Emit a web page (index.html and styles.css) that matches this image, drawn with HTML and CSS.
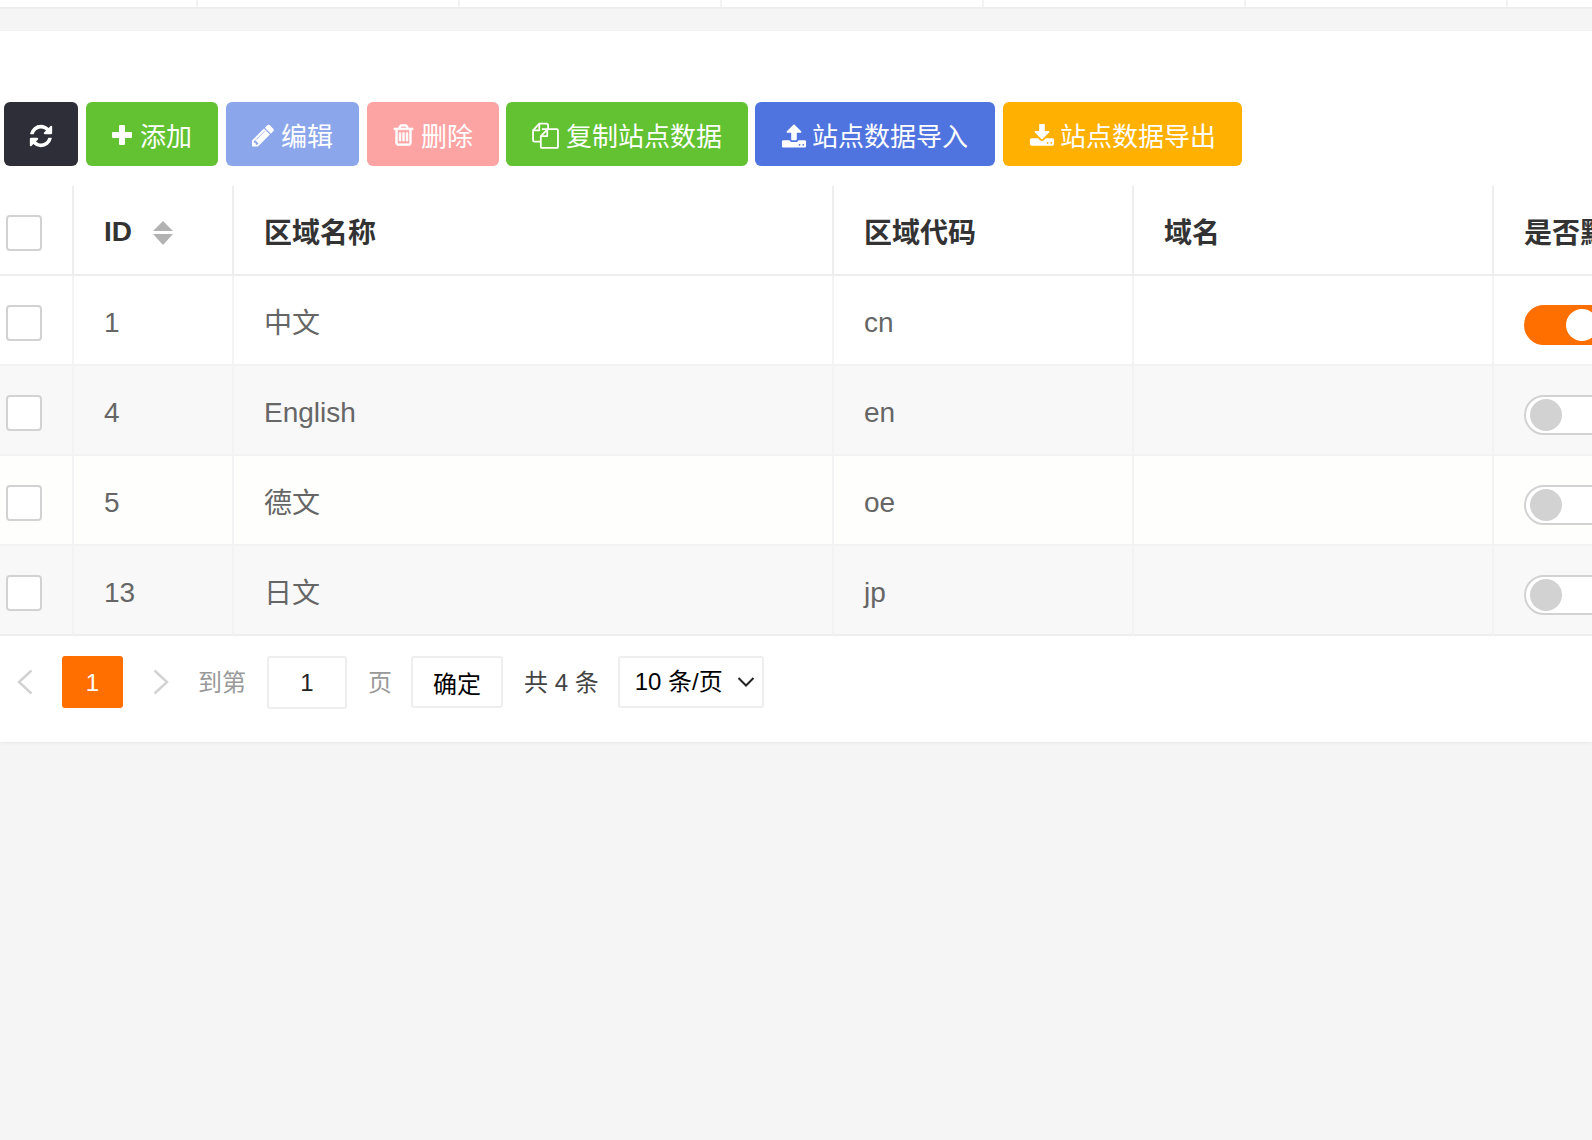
FILE: index.html
```html
<!DOCTYPE html>
<html lang="zh-CN">
<head>
<meta charset="utf-8">
<title>站点管理</title>
<link rel="stylesheet" href="styles.css">
</head>
<body>
<div class="top-strip">
  <span class="strip-cell first"></span><span class="strip-cell"></span><span class="strip-cell"></span><span class="strip-cell"></span><span class="strip-cell"></span><span class="strip-cell"></span><span class="strip-cell"></span>
</div>
<main class="card">
  <div class="toolbar">
    <button class="btn btn-dark icon-only"><svg class="ico ico-refresh" viewBox="0 0 1792 1792"><path d="M1639 1056q0 5-1 7-64 268-268 434.5t-478 166.5q-146 0-282.5-55t-243.5-157l-129 129q-19 19-45 19t-45-19-19-45v-448q0-26 19-45t45-19h448q26 0 45 19t19 45-19 45l-137 137q71 66 161 102t187 36q134 0 250-65t186-179q11-17 53-117 8-23 30-23h192q13 0 22.5 9.5t9.5 22.5zm25-800v448q0 26-19 45t-45 19h-448q-26 0-45-19t-19-45 19-45l138-138q-148-137-349-137-134 0-250 65t-186 179q-11 17-53 117-8 23-30 23h-199q-13 0-22.5-9.5t-9.5-22.5v-7q65-268 270-434.5t480-166.5q146 0 284 55.5t245 156.5l130-129q19-19 45-19t45 19 19 45z"/></svg></button>
    <button class="btn btn-green"><svg class="ico ico-plus" viewBox="0 0 20 20"><path d="M7 1a1 1 0 0 1 1-1h4a1 1 0 0 1 1 1v6h6a1 1 0 0 1 1 1v4a1 1 0 0 1-1 1h-6v6a1 1 0 0 1-1 1H8a1 1 0 0 1-1-1v-6H1a1 1 0 0 1-1-1V8a1 1 0 0 1 1-1h6z"/></svg>添加</button>
    <button class="btn btn-blue-off"><svg class="ico ico-pencil" viewBox="128 128 1600 1536"><path d="M491 1536l91-91-235-235-91 91v107h128v128h107zm523-928q0-22-22-22-10 0-17 7l-542 542q-7 7-7 17 0 22 22 22 10 0 17-7l542-542q7-7 7-17zm-54-192l416 416-832 832h-416v-416zm683 96q0 53-37 90l-166 166-416-416 166-165q36-38 90-38 53 0 91 38l235 234q37 39 37 91z"/></svg>编辑</button>
    <button class="btn btn-red-off"><svg class="ico ico-trash" viewBox="128 128 1536 1536"><path class="thick" d="M704 736v576q0 14-9 23t-23 9h-64q-14 0-23-9t-9-23v-576q0-14 9-23t23-9h64q14 0 23 9t9 23zm256 0v576q0 14-9 23t-23 9h-64q-14 0-23-9t-9-23v-576q0-14 9-23t23-9h64q14 0 23 9t9 23zm256 0v576q0 14-9 23t-23 9h-64q-14 0-23-9t-9-23v-576q0-14 9-23t23-9h64q14 0 23 9t9 23zm128 724v-948h-896v948q0 22 7 40.5t14.500 27 10.500 8.500h832q3 0 10.500-8.500t14.500-27 7-40.500zm-672-1076h448l-48-117q-7-9-17-11h-317q-10 2-17 11zm928 32v64q0 14-9 23t-23 9h-96v948q0 83-47 143.500t-113 60.500h-832q-66 0-113-58.500t-47-141.500v-952h-96q-14 0-23-9t-9-23v-64q0-14 9-23t23-9h309l70-167q15-37 54-63t79-26h320q40 0 79 26t54 63l70 167h309q14 0 23 9t9 23z"/></svg>删除</button>
    <button class="btn btn-green tight"><svg class="ico ico-copy" viewBox="0 0 26 26"><path class="line" d="M8 19H2.500a1.500 1.500 0 0 1-1.500-1.500V8l6-6.500h7a1.500 1.500 0 0 1 1.500 1.500v3.500M1.500 8H7V2"/><path class="line" d="M9.500 6.800h14.500a1 1 0 0 1 1 1V24a1 1 0 0 1-1 1H9.500a1 1 0 0 1-1-1V13.500l6-6"/><path class="line" d="M8.500 13.500h6.200V7"/></svg>复制站点数据</button>
    <button class="btn btn-blue tight"><svg class="ico ico-load" viewBox="0 64 1792 1600"><path d="M1344 1472q0-26-19-45t-45-19-45 19-19 45 19 45 45 19 45-19 19-45zm256 0q0-26-19-45t-45-19-45 19-19 45 19 45 45 19 45-19 19-45zm128-224v320q0 40-28 68t-68 28h-1472q-40 0-68-28t-28-68v-320q0-40 28-68t68-28h427q21 56 70.500 92t110.500 36h256q61 0 110.500-36t70.500-92h427q40 0 68 28t28 68zm-325-648q-17 40-59 40h-256v448q0 26-19 45t-45 19h-256q-26 0-45-19t-19-45v-448h-256q-42 0-59-40-17-39 14-69l448-448q18-19 45-19t45 19l448 448q31 30 14 69z"/></svg>站点数据导入</button>
    <button class="btn btn-orange"><svg class="ico ico-load" viewBox="0 64 1792 1600"><path d="M1344 1344q0-26-19-45t-45-19-45 19-19 45 19 45 45 19 45-19 19-45zm256 0q0-26-19-45t-45-19-45 19-19 45 19 45 45 19 45-19 19-45zm128-224v320q0 40-28 68t-68 28h-1472q-40 0-68-28t-28-68v-320q0-40 28-68t68-28h465l135 136q58 56 136 56t136-56l136-136h464q40 0 68 28t28 68zm-325-569q17 41-14 70l-448 448q-18 19-45 19t-45-19l-448-448q-31-29-14-70 17-39 59-39h256v-448q0-26 19-45t45-19h256q26 0 45 19t19 45v448h256q42 0 59 39z"/></svg>站点数据导出</button>
  </div>

  <div class="table-wrap">
    <table class="data">
      <colgroup>
        <col class="c-check"><col class="c-id"><col class="c-name"><col class="c-code"><col class="c-domain"><col class="c-default">
      </colgroup>
      <thead>
        <tr>
          <th class="check-cell"><span class="checkbox"></span></th>
          <th class="latin"><span class="id-head">ID<svg class="sort" viewBox="0 0 20 24"><path d="M10 0l10 10H0z"/><path d="M0 13h20L10 24z"/></svg></span></th>
          <th>区域名称</th>
          <th>区域代码</th>
          <th>域名</th>
          <th>是否默认</th>
        </tr>
      </thead>
      <tbody>
        <tr>
          <td class="check-cell"><span class="checkbox"></span></td><td>1</td><td class="cjk">中文</td><td>cn</td><td></td><td><span class="switch on"><i class="knob"></i></span></td>
        </tr>
        <tr class="alt">
          <td class="check-cell"><span class="checkbox"></span></td><td>4</td><td>English</td><td>en</td><td></td><td><span class="switch"><i class="knob"></i></span></td>
        </tr>
        <tr class="warm">
          <td class="check-cell"><span class="checkbox"></span></td><td>5</td><td class="cjk">德文</td><td>oe</td><td></td><td><span class="switch"><i class="knob"></i></span></td>
        </tr>
        <tr class="alt">
          <td class="check-cell"><span class="checkbox"></span></td><td>13</td><td class="cjk">日文</td><td>jp</td><td></td><td><span class="switch"><i class="knob"></i></span></td>
        </tr>
      </tbody>
    </table>
  </div>

  <nav class="pager">
    <svg class="chev prev" viewBox="0 0 16 26"><path d="M14.500 1.500L2 13l12.500 11.500"/></svg>
    <span class="page-num">1</span>
    <svg class="chev next" viewBox="0 0 16 26"><path d="M1.500 1.500L14 13 1.500 24.500"/></svg>
    <span class="muted goto">到第</span>
    <span class="page-input">1</span>
    <span class="muted page-word">页</span>
    <span class="confirm">确定</span>
    <span class="total">共 4 条</span>
    <span class="size-select">10 条/页<svg class="caret" viewBox="0 0 18 12"><path d="M1.500 2L9 9.500 16.500 2"/></svg></span>
  </nav>
</main>
</body>
</html>
```
FILE: styles.css
```css
* { box-sizing: border-box; }
html, body { margin: 0; padding: 0; }
body {
  width: 1592px;
  height: 1140px;
  overflow: hidden;
  background: #f5f5f5;
  font-family: "Liberation Sans", "Noto Sans CJK SC", sans-serif;
  color: #666;
}

/* remnant of the table scrolled off the top */
.top-strip {
  display: flex;
  height: 9px;
  background: #fff;
  border-bottom: 2px solid #eee;
  overflow: hidden;
}
.strip-cell {
  flex: 0 0 262px;
  border-right: 2px solid #f3f3f3;
}
.strip-cell.first { flex-basis: 198px; }

.card {
  margin-top: 22px;
  height: 711px;
  background: #fff;
  box-shadow: 0 1px 3px rgba(0, 0, 0, .06);
  padding-top: 71px;
  overflow: hidden;
}

/* toolbar */
.toolbar {
  display: flex;
  gap: 8px;
  margin-left: 4px;
  height: 64px;
}
.btn {
  display: inline-flex;
  align-items: center;
  height: 64px;
  padding: 0 26px;
  border: 0;
  border-radius: 6px;
  color: #fff;
  font-family: inherit;
  font-size: 26px;
  white-space: nowrap;
}
.btn.tight { margin-left: -1px; }
.icon-only { padding: 0 24px; }
.btn-dark { background: #2e2e38; }
.btn-green { background: #62c231; }
.btn-blue-off { background: #8ca6ec; }
.btn-red-off { background: #fca4a4; }
.btn-blue { background: #4f74e0; padding-right: 27px; }
.btn-orange { background: #ffb000; }

.ico { display: block; fill: #fff; flex: none; }
.ico .line { fill: none; stroke: #fff; stroke-width: 1.7; stroke-linejoin: round; }
.ico .thick { stroke: #fff; stroke-width: 45; }
.ico-refresh { width: 26px; height: 26px; margin-top: 3px; }
.ico-plus { width: 20px; height: 20px; margin-right: 8px; margin-top: 2px; }
.ico-pencil { width: 23px; height: 23px; margin-right: 6px; margin-top: 2px; }
.ico-trash { width: 21px; height: 24px; margin-right: 7px; margin-top: 2px; }
.ico-copy { width: 27px; height: 27px; margin-right: 7px; margin-top: 2px; }
.ico-load { width: 26px; height: 24px; margin-right: 5px; margin-top: 4px; }

/* table */
.table-wrap {
  margin-top: 20px;
  overflow: hidden;
}
.data {
  width: 1794px;
  table-layout: fixed;
  border-collapse: separate;
  border-spacing: 0;
  font-size: 28px;
}
.c-check { width: 74px; }
.c-id { width: 160px; }
.c-name { width: 600px; }
.c-code { width: 300px; }
.c-domain { width: 360px; }
.c-default { width: 300px; }

th, td {
  height: 90px;
  padding: 0 0 0 30px;
  text-align: left;
  vertical-align: middle;
  white-space: nowrap;
  overflow: hidden;
}
th {
  padding-top: 2px;
  color: #333;
  font-weight: 700;
  border-right: 2px solid #eee;
  border-bottom: 2px solid #eee;
}
th.latin { padding-top: 4px; }
td {
  padding-top: 6px;
  color: #666;
  font-weight: 400;
  border-right: 2px solid #f3f3f3;
  border-bottom: 2px solid #f3f3f3;
}
td.cjk { padding-top: 2px; }
tbody tr:last-child td { border-bottom-color: #eee; }
.alt td { background: #f8f8f8; }
.warm td { background: #fefefc; }

th.check-cell, td.check-cell { padding: 6px 0 0 6px; }
.checkbox {
  display: block;
  width: 36px;
  height: 36px;
  background: #fff;
  border: 2px solid #d2d2d2;
  border-radius: 4px;
}
.id-head { display: inline-flex; align-items: center; }
.sort {
  display: block;
  width: 20px;
  height: 24px;
  margin-left: 21px;
  margin-top: 2px;
  fill: #b2b2b2;
}

.switch {
  display: block;
  position: relative;
  width: 92px;
  height: 40px;
  margin-top: 4px;
  background: #fff;
  border: 2px solid #d2d2d2;
  border-radius: 20px;
}
.knob {
  position: absolute;
  left: 4px;
  top: 2px;
  width: 32px;
  height: 32px;
  border-radius: 50%;
  background: #d2d2d2;
}
.switch.on { background: #ff6f00; border-color: #ff6f00; }
.switch.on .knob { left: 40px; background: #fff; }

/* pagination */
.pager {
  display: flex;
  align-items: flex-start;
  padding-top: 20px;
  font-size: 24px;
  line-height: 54px;
}
.chev {
  width: 16px;
  height: 26px;
  margin-top: 13px;
  fill: none;
  stroke: #d2d2d2;
  stroke-width: 2.4;
}
.prev { margin-left: 17px; }
.next { margin-left: 30px; }
.page-num {
  width: 61px;
  height: 52px;
  margin-left: 29px;
  text-align: center;
  color: #fff;
  background: #ff6f00;
  border-radius: 3px;
}
.muted { color: #999; }
.goto { margin-left: 29px; }
.page-input {
  width: 80px;
  height: 53px;
  margin-left: 21px;
  text-align: center;
  color: #222;
  background: #fff;
  border: 2px solid #eee;
  border-radius: 3px;
  line-height: 49px;
}
.page-word { margin-left: 21px; }
.confirm {
  width: 92px;
  height: 52px;
  margin-left: 19px;
  text-align: center;
  color: #000;
  border: 2px solid #eee;
  border-radius: 3px;
  line-height: 54px;
}
.total { margin-left: 21px; color: #444; }
.size-select {
  display: flex;
  align-items: center;
  width: 146px;
  height: 52px;
  margin-left: 19px;
  padding-left: 15px;
  color: #000;
  border: 2px solid #eee;
  border-radius: 3px;
  line-height: 50px;
}
.caret {
  width: 18px;
  height: 12px;
  margin-left: 14px;
  fill: none;
  stroke: #222;
  stroke-width: 2;
}
```
